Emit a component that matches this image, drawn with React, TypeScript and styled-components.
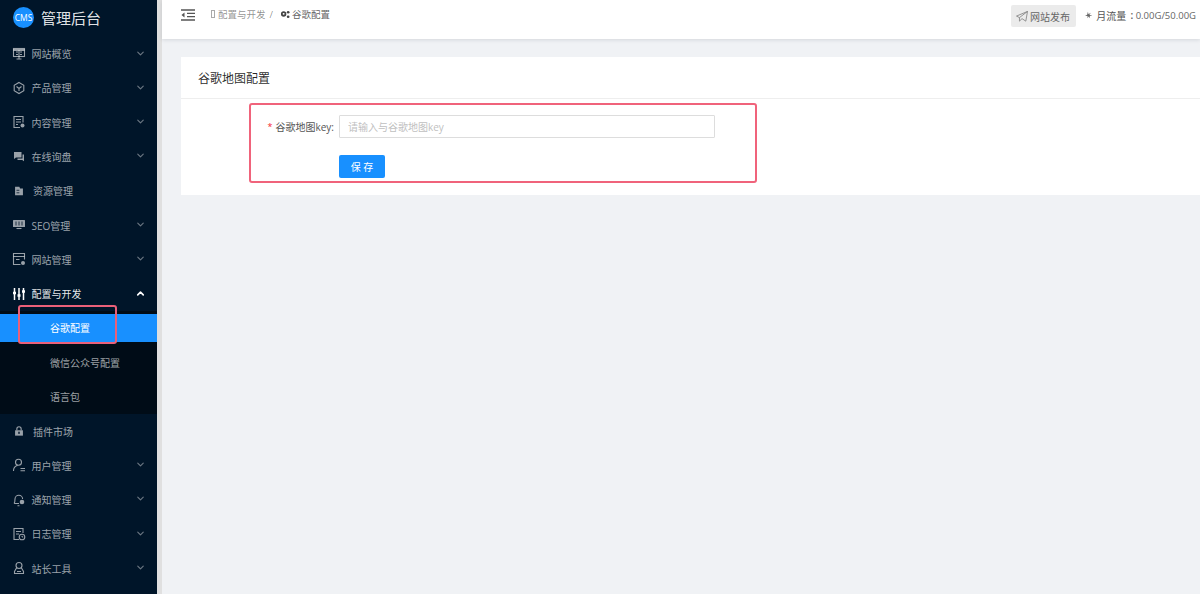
import React, { FC, ReactNode } from 'react'
import styled, { createGlobalStyle } from 'styled-components'
import { ChevronDown, ChevronUp } from 'lucide-react'

const GlobalStyle = createGlobalStyle`
html, body {
 margin: 0;
 padding: 0;
 height: 100%;
 overflow: hidden;
}
body {
 font-family: "Open Sans", "Noto Sans CJK SC", "Liberation Sans", sans-serif;
}
`

const ic = { width: 14, height: 14, viewBox: '0 0 14 14', fill: 'none', stroke: 'currentColor', strokeWidth: 1.1 }

const icons: Record<string, ReactNode> = {
 overview: <svg {...ic}><rect x="1.5" y="1.5" width="11" height="8" /><path d="M1.500 3h11" strokeWidth="2" /><path d="M4 5h2M8 5h2M4 7.500h2M8 7.500h2M7 3v6.500M4.500 12h5M7 9.500V12" /></svg>,
 product: <svg {...ic}><path d="M7 1.500l4.800 2.700v5.600L7 12.500 2.200 9.800V4.200z" /><path d="M4.500 5.500L7 7.500l2.500-2M7 7.500v2.500" /></svg>,
 content: <svg {...ic}><path d="M8 12.500H2V1.500h9v6" /><path d="M4 4.500h5M4 7h5M4 9.500h2" /><circle cx="10.500" cy="10.500" r="2" fill="currentColor" stroke="none" /></svg>,
 chat: <svg {...ic}><path d="M2 2h7.500v5.500H4L2 9z" fill="currentColor" stroke="none" /><path d="M10.500 4.500H12v6.800l-1.800-1.300H5.500V8.500h5z" fill="currentColor" stroke="none" /></svg>,
 resource: <svg {...ic}><path d="M1.500 1h6l1 2.500h4V13h-11z" fill="currentColor" stroke="none" /><path d="M3.500 6h4M3.500 9.500h4" stroke="#001529" /></svg>,
 seo: <svg {...ic}><rect x="1" y="2" width="12" height="7" rx="0.500" fill="currentColor" stroke="none" /><path d="M4 3.500v4M7 3.500v4M10 3.500v4" stroke="#001529" strokeWidth="0.800" /><path d="M4.500 10.500h5" /></svg>,
 site: <svg {...ic}><path d="M12.500 7.500v-6h-11v11h7" /><path d="M1.500 4.500h11M4 7.500h3.500" /><circle cx="11" cy="11" r="2" fill="currentColor" stroke="none" /></svg>,
 config: <svg width="14" height="14" viewBox="0 0 14 14" fill="none" stroke="currentColor" strokeWidth="1.500"><path d="M2.500 1v12M7 1v12M11.500 1v12" /><path d="M1 6h3M5.500 8.500h3M10 4.500h3" strokeWidth="2.400" /></svg>,
 plugin: <svg {...ic}><path d="M1.500 6h11v7.500h-11z" fill="currentColor" stroke="none" /><path d="M4 6V4a3 3 0 016 0v2" strokeWidth="1.600" /><rect x="6" y="8" width="2" height="3" fill="#001529" stroke="none" /></svg>,
 user: <svg {...ic}><circle cx="6.500" cy="4.200" r="3" /><path d="M1.500 13c0-3 1.800-5 4-5.500M8.500 10.500h4.500M8.500 12.800h4.500" /></svg>,
 bell: <svg {...ic}><path d="M2 10.500c1-1 1-2.500 1-4.500a3.800 3.800 0 017.600 0M2 10.500h5M5.500 12.800h2" /><circle cx="10" cy="9" r="2.300" fill="currentColor" stroke="none" /></svg>,
 log: <svg {...ic}><path d="M7 12.500H2V1.500h9V6" /><path d="M4 4.500h5M4 7h3" /><circle cx="10" cy="10" r="2.800" /><path d="M10 8.800V10h1.200" strokeWidth="0.900" /></svg>,
 tools: <svg {...ic}><circle cx="7" cy="4.500" r="3" /><path d="M4.500 7l-2 3.500v2h9v-2l-2-3.500M5 10.500h4" /></svg>,
}

interface ItemProps {
 icon: string
 label: string
 arrow?: 'up' | 'down'
 active?: boolean
 small?: boolean
}

const MenuItem: FC<ItemProps> = ({ icon, label, arrow, active, small }) => (
 <Row $active={active}>
  <RowIcon $active={active} $small={small}>{icons[icon]}</RowIcon>
  <span>{label}</span>
  {arrow === 'down' && <Arrow><ChevronDown size={11} strokeWidth={2.5} /></Arrow>}
  {arrow === 'up' && <Arrow $active><ChevronUp size={11} strokeWidth={3.5} /></Arrow>}
 </Row>
)

const App: FC = () => (
 <Page>
  <GlobalStyle />
  <Sidebar>
   <Logo>
    <LogoBadge>CMS</LogoBadge>
    <LogoText>管理后台</LogoText>
   </Logo>
   <MenuItem icon='overview' label='网站概览' arrow='down' />
   <MenuItem icon='product' label='产品管理' arrow='down' />
   <MenuItem icon='content' label='内容管理' arrow='down' />
   <MenuItem icon='chat' label='在线询盘' arrow='down' />
   <MenuItem icon='resource' label='资源管理' small />
   <MenuItem icon='seo' label='SEO管理' arrow='down' />
   <MenuItem icon='site' label='网站管理' arrow='down' />
   <MenuItem icon='config' label='配置与开发' arrow='up' active />
   <SubMenu>
    <SubItem $active>谷歌配置<SideMark /></SubItem>
    <SubItem>微信公众号配置</SubItem>
    <SubItem>语言包</SubItem>
   </SubMenu>
   <MenuItem icon='plugin' label='插件市场' small />
   <MenuItem icon='user' label='用户管理' arrow='down' />
   <MenuItem icon='bell' label='通知管理' arrow='down' />
   <MenuItem icon='log' label='日志管理' arrow='down' />
   <MenuItem icon='tools' label='站长工具' arrow='down' />
  </Sidebar>
  <Main>
   <Header>
    <Fold>
     <svg width="14" height="12" viewBox="0 0 14 12" fill="none" stroke="#555" strokeWidth="1.300">
      <path d="M0 1h14M6 4.300h8M6 7.700h8M0 11h14" />
      <path d="M3.500 3.500v5L0.500 6z" fill="#555" stroke="none" />
     </svg>
    </Fold>
    <Crumbs>
     <Missing />
     <CrumbLink>配置与开发</CrumbLink>
     <CrumbSep>/</CrumbSep>
     <svg width="10" height="9" viewBox="0 0 11 10" fill="#444">
      <path d="M4 1.500a2.800 2.800 0 100 6 2.800 2.800 0 000-6zm0 1.700a1.100 1.100 0 110 2.200 1.100 1.100 0 010-2.200z" />
      <circle cx="9" cy="2.500" r="1.500" />
      <circle cx="9" cy="7.500" r="1.500" />
     </svg>
     <CrumbCurrent>谷歌配置</CrumbCurrent>
    </Crumbs>
    <HeaderRight>
     <PublishButton>
      <svg width="12" height="11" viewBox="0 0 14 13" fill="none" stroke="#777" strokeWidth="0.900">
       <path d="M13.500 0.500L0.500 6l3.500 1.800L13.500 0.500zM13.500 0.500L11.500 12 7 9 4 12V7.800" />
      </svg>
      网站发布
     </PublishButton>
     <Traffic>
      <svg width="8" height="8" viewBox="0 0 10 10" fill="#666">
       <path d="M4 0.500l.8 3.300L8 2 6 5l4 .5-3.500 1L7 9.500 5 7 3.500 9.500 3.500 6.500 0 6l3-1.500z" />
      </svg>
      <span>月流量</span>
      <TrafficColon>:</TrafficColon>
      <TrafficValue>0.00G/50.00G</TrafficValue>
     </Traffic>
    </HeaderRight>
   </Header>
   <Content>
    <Card>
     <CardTitle>谷歌地图配置</CardTitle>
     <CardBody>
      <FormRow>
       <FormLabel><Star>*</Star>谷歌地图key:</FormLabel>
       <KeyInput placeholder='请输入与谷歌地图key' />
      </FormRow>
      <SaveRow>
       <SaveButton>保 存</SaveButton>
      </SaveRow>
      <FormMark />
     </CardBody>
    </Card>
   </Content>
  </Main>
 </Page>
)

export default App


const Page = styled.div`
display: flex;
width: 1200px;
height: 594px;
overflow: hidden;
background: #e0e0e0;
`

const Sidebar = styled.aside`
width: 157px;
height: 594px;
flex: none;
background: #001529;
color: rgba(255, 255, 255, 0.65);
font-size: 10px;
overflow: hidden;
`

const Logo = styled.div`
display: flex;
align-items: center;
height: 36.5px;
padding: 0 0 2px 13px;
box-sizing: border-box;
gap: 7px;
`

const LogoBadge = styled.div`
width: 21px;
height: 21px;
border-radius: 50%;
background: #1890ff;
color: #fff;
font-size: 8.500px;
display: flex;
align-items: center;
justify-content: center;
`

const LogoText = styled.div`
font-size: 15px;
color: rgba(255, 255, 255, 0.9);
`

const Row = styled.div<{ $active?: boolean }>`
position: relative;
display: flex;
align-items: center;
height: 34.3px;
padding-left: 12px;
color: ${p => (p.$active ? 'rgba(255, 255, 255, 0.92)' : 'rgba(255, 255, 255, 0.62)')};
`

const RowIcon = styled.span<{ $active?: boolean; $small?: boolean }>`
display: flex;
align-items: center;
justify-content: center;
width: 14px;
height: 14px;
margin-right: ${p => (p.$small ? '7px' : '5.5px')};
color: ${p => (p.$active ? '#fff' : 'rgba(255, 255, 255, 0.6)')};

svg {
 width: ${p => (p.$small ? '10px' : '14px')};
 height: ${p => (p.$small ? '10px' : '14px')};
}
`

const Arrow = styled.span<{ $active?: boolean }>`
position: absolute;
right: 11.500px;
top: 11px;
display: flex;
color: ${p => (p.$active ? '#fff' : 'rgba(255, 255, 255, 0.42)')};
`

const SubMenu = styled.div`
background: #000c17;
padding-top: 3px;
height: 103px;
box-sizing: border-box;
`

const SubItem = styled.div<{ $active?: boolean }>`
position: relative;
display: flex;
align-items: center;
height: 28px;
margin-bottom: 6.300px;
padding-left: 50px;
background: ${p => (p.$active ? '#1890ff' : 'transparent')};
color: ${p => (p.$active ? '#fff' : 'rgba(255, 255, 255, 0.62)')};
`

const SideMark = styled.div`
position: absolute;
left: 18px;
top: -9px;
width: 99px;
height: 39px;
box-sizing: border-box;
border: 2px solid #ea6079;
border-radius: 3px;
`

const Main = styled.div`
width: 1038px;
height: 594px;
margin-left: 5px;
flex: none;
display: flex;
flex-direction: column;
background: #f0f2f5;
`

const Header = styled.header`
display: flex;
align-items: center;
height: 39px;
flex: none;
padding: 0 0 9px 19px;
box-sizing: border-box;
background: #fff;
box-shadow: 0 1px 4px rgba(0, 21, 41, 0.12);
font-size: 10px;
`

const Fold = styled.div`
display: flex;
width: 14px;
margin-right: 16px;
margin-top: -1px;
`

const Crumbs = styled.div`
display: flex;
align-items: center;
margin-top: -2px;
font-size: 9.500px;
color: rgba(0, 0, 0, 0.45);
`

const Missing = styled.span`
width: 2px;
height: 6px;
margin-right: 3px;
border: 1px solid #aaa;
`

const CrumbLink = styled.span``

const CrumbSep = styled.span`
margin: 0 7px 0 4px;
`

const CrumbCurrent = styled.span`
margin-left: 2px;
color: rgba(0, 0, 0, 0.65);
`

const HeaderRight = styled.div`
display: flex;
align-items: center;
margin-left: auto;
`

const PublishButton = styled.div`
display: flex;
align-items: center;
gap: 2px;
width: 65px;
height: 22px;
margin-top: 2px;
padding-left: 5px;
box-sizing: border-box;
background: #ebebeb;
border-radius: 2px;
color: #666;
`

const Traffic = styled.div`
display: flex;
align-items: center;
width: 111px;
margin-left: 9px;
margin-right: 4px;
gap: 4px;
color: #555;
white-space: nowrap;
`

const TrafficColon = styled.span`
width: 6px;
margin: 0 0 0 -1px;
text-align: center;
font-weight: 600;
`

const TrafficValue = styled.span`
margin-left: -3px;
font-size: 9.500px;
color: #666;
`

const Content = styled.main`
padding: 18px 0 0 19px;
flex: 1;
`

const Card = styled.section`
background: #fff;
height: 138px;
`

const CardTitle = styled.div`
height: 42px;
padding-left: 17px;
display: flex;
align-items: center;
box-sizing: border-box;
border-bottom: 1px solid #eee;
font-size: 12px;
color: rgba(0, 0, 0, 0.85);
`

const CardBody = styled.div`
position: relative;
height: 96px;
`

const FormRow = styled.div`
display: flex;
align-items: center;
padding-top: 16px;
`

const FormLabel = styled.label`
display: flex;
justify-content: flex-end;
align-items: center;
width: 153px;
margin-right: 5px;
font-size: 10px;
color: #555;
white-space: nowrap;
`

const Star = styled.span`
color: #f5222d;
font-size: 9px;
margin-right: 3px;
`

const KeyInput = styled.input`
width: 376px;
height: 23px;
padding: 0 8px;
box-sizing: border-box;
border: 1px solid #ddd;
border-radius: 1px;
outline: none;
font: inherit;
font-size: 10px;

&::placeholder {
 color: #bfbfbf;
}
`

const SaveRow = styled.div`
display: flex;
padding: 17px 0 0 158px;
`

const SaveButton = styled.button`
width: 46px;
height: 23px;
padding: 0;
border: none;
border-radius: 2px;
background: #1890ff;
color: #fff;
font-family: inherit;
font-size: 10px;
`

const FormMark = styled.div`
position: absolute;
left: 68px;
top: 4px;
width: 508px;
height: 80px;
box-sizing: border-box;
border: 2px solid #f0637b;
border-radius: 3px;
`
